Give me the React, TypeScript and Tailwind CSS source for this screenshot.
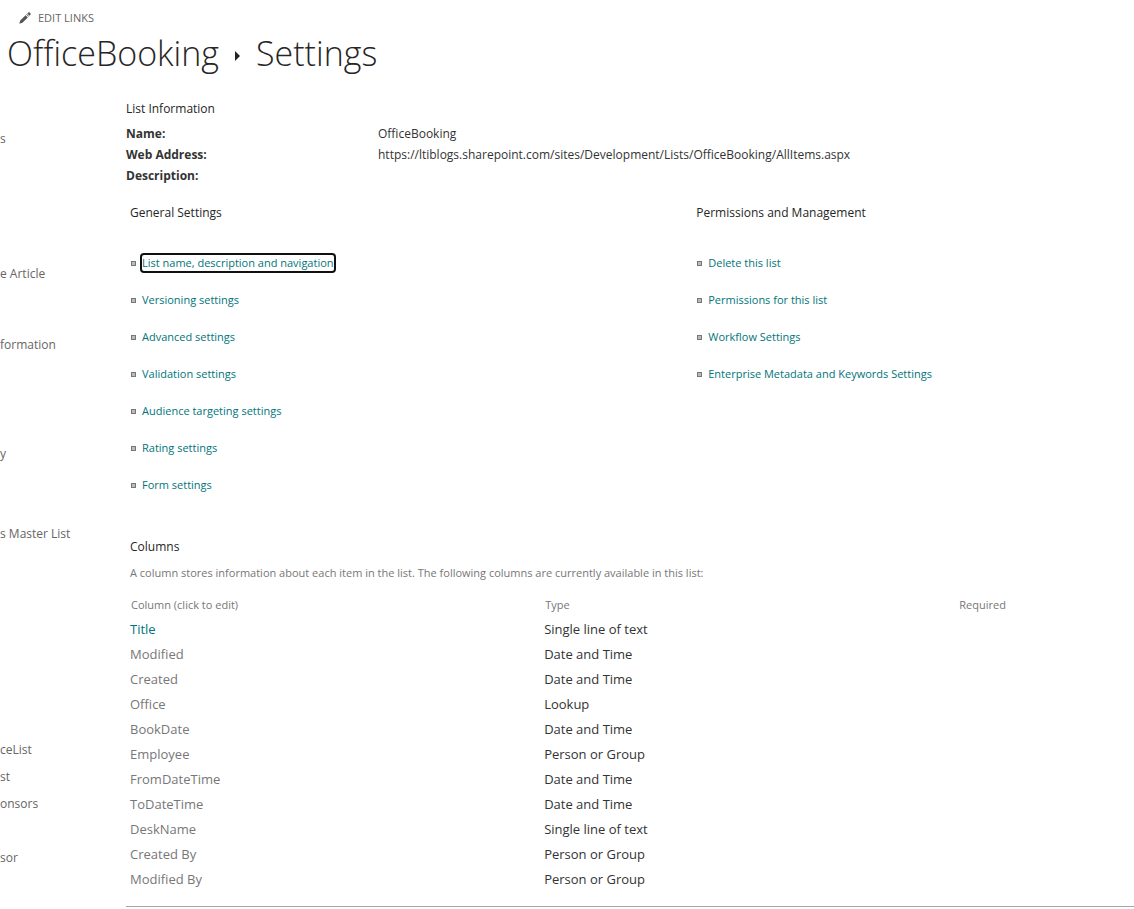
type SideItem = { label: string; gap: string };

const sideItems: SideItem[] = [
  { label: "s", gap: "" },
  { label: "e Article", gap: "mt-[108px]" },
  { label: "formation", gap: "mt-[44px]" },
  { label: "y", gap: "mt-[82px]" },
  { label: "s Master List", gap: "mt-[53px]" },
  { label: "ceList", gap: "mt-[189px]" },
  { label: "st", gap: "" },
  { label: "onsors", gap: "" },
  { label: "sor", gap: "mt-[27px]" },
];

const info = [
  ["Name:", "OfficeBooking"],
  ["Web Address:", "https://ltiblogs.sharepoint.com/sites/Development/Lists/OfficeBooking/AllItems.aspx"],
  ["Description:", ""],
];

const generalLinks = [
  "List name, description and navigation",
  "Versioning settings",
  "Advanced settings",
  "Validation settings",
  "Audience targeting settings",
  "Rating settings",
  "Form settings",
];

const permissionLinks = [
  "Delete this list",
  "Permissions for this list",
  "Workflow Settings",
  "Enterprise Metadata and Keywords Settings",
];

const columns = [
  ["Title", "Single line of text"],
  ["Modified", "Date and Time"],
  ["Created", "Date and Time"],
  ["Office", "Lookup"],
  ["BookDate", "Date and Time"],
  ["Employee", "Person or Group"],
  ["FromDateTime", "Date and Time"],
  ["ToDateTime", "Date and Time"],
  ["DeskName", "Single line of text"],
  ["Created By", "Person or Group"],
  ["Modified By", "Person or Group"],
];

function PencilIcon() {
  return (
    <svg width="12" height="12" viewBox="0 0 12 12" fill="#555" aria-hidden="true">
      <path d="M0.3 11.7 1.2 8.6 6.6 3.2 8.8 5.4 3.4 10.8ZM7.2 2.6 7.8 2 10 4.2 9.4 4.8ZM8.3 1.5 9.3.5Q10 0 10.7.6L11.4 1.3Q12 2 11.5 2.7L10.5 3.7Z" />
    </svg>
  );
}

function LinkList({ title, links, focused }: { title: string; links: string[]; focused?: string }) {
  return (
    <section>
      <h2 className="text-[12px] leading-5 text-[#262626]">{title}</h2>
      <ul className="mt-[30px] flex flex-col gap-[17px]">
        {links.map((label) => (
          <li key={label} className="flex h-5 items-center gap-[6px] pl-px">
            <span className="size-[5px] shrink-0 border border-[#777] bg-[#bbb]" />
            <a
              href="#"
              className={
                label === focused
                  ? "rounded-[2px] text-[11px] leading-4 whitespace-nowrap text-[#00757a] outline-2 outline-[#101010]"
                  : "text-[11px] leading-4 whitespace-nowrap text-[#00757a]"
              }
            >
              {label}
            </a>
          </li>
        ))}
      </ul>
    </section>
  );
}

export default function App() {
  return (
    <div className="min-h-screen overflow-x-hidden bg-white font-['Open_Sans','Noto_Sans',sans-serif] text-[13px] text-[#333]">
      <header>
        <button type="button" className="ml-[19px] flex items-center gap-[7px] pt-2 text-[11px] leading-5 text-[#666]">
          <PencilIcon />
          EDIT LINKS
        </button>
        <h1 className="flex items-center pl-[7px] text-[34px] leading-[50px] font-light text-[#262626]">
          <a href="#">OfficeBooking</a>
          <svg width="5" height="10" viewBox="0 0 5 10" className="mx-4 mt-1.5" aria-hidden="true">
            <path d="M0 0 5 5 0 10Z" fill="#222" />
          </svg>
          <span>Settings</span>
        </h1>
      </header>
      <div className="flex">
        <nav className="w-[126px] shrink-0 pt-[47px]">
          <ul>
            {sideItems.map(({ label, gap }) => (
              <li key={label} className={gap}>
                <a href="#" className="block text-[12px] leading-[27px] whitespace-nowrap text-[#666]">
                  {label}
                </a>
              </li>
            ))}
          </ul>
        </nav>
        <main className="min-w-0 flex-1 border-b border-[#a6a6a6] pt-[21px] pb-[14px]">
          <h2 className="text-[12px] leading-5 text-[#262626]">List Information</h2>
          <table className="mt-1 w-full table-fixed text-left text-[12px] leading-[21px]">
            <tbody>
              {info.map(([name, value]) => (
                <tr key={name}>
                  <th scope="row" className="w-1/4 font-bold">{name}</th>
                  <td className="whitespace-nowrap">{value}</td>
                </tr>
              ))}
            </tbody>
          </table>
          <div className="mt-[17px] grid grid-cols-[56.4%_1fr] pl-1">
            <LinkList title="General Settings" links={generalLinks} focused={generalLinks[0]} />
            <LinkList title="Permissions and Management" links={permissionLinks} />
          </div>
          <section className="mt-[42px] pl-1">
            <h2 className="text-[12px] leading-5 text-[#262626]">Columns</h2>
            <p className="mt-[6px] text-[11px] leading-5 text-[#777]">
              A column stores information about each item in the list. The following columns are currently available in this list:
            </p>
            <table className="mt-[9px] w-full table-fixed text-left">
              <thead className="text-[11px] leading-[25px] text-[#777]">
                <tr>
                  <th scope="col" className="w-[41.25%] pl-px font-normal">Column (click to edit)</th>
                  <th scope="col" className="w-[41.25%] pl-px font-normal">Type</th>
                  <th scope="col" className="pl-px font-normal">Required</th>
                </tr>
              </thead>
              <tbody className="leading-[25px]">
                {columns.map(([name, type], i) => (
                  <tr key={name}>
                    <td>
                      <a href="#" className={i === 0 ? "text-[#00757a]" : "text-[#777]"}>{name}</a>
                    </td>
                    <td>{type}</td>
                    <td />
                  </tr>
                ))}
              </tbody>
            </table>
          </section>
        </main>
      </div>
    </div>
  );
}
